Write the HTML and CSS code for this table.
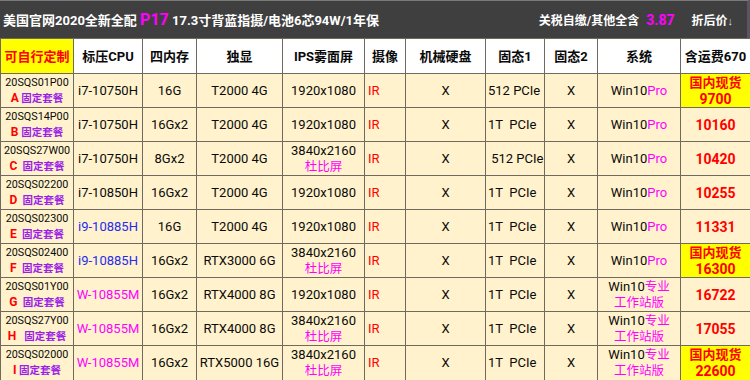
FILE: index.html
```html
<!DOCTYPE html>
<html lang="zh">
<head>
<meta charset="utf-8">
<title>P17</title>
<link rel="stylesheet" href="styles.css">
</head>
<body>
<div class="topbar">
  <div class="title">美国官网2020全新全配 <span class="p17">P17</span> 17.3寸背蓝指摄/电池6芯94W/1年保</div>
  <div class="right"><span>关税自缴/其他全含<span class="rate">3.87</span></span><span class="after">折后价<span class="arrow">↓</span></span></div>
</div>
<table class="grid">
  <colgroup>
    <col class="c1"><col class="c2"><col class="c3"><col class="c4"><col class="c5"><col class="c6"><col class="c7"><col class="c8"><col class="c9"><col class="c10"><col class="c11">
  </colgroup>
  <thead>
    <tr>
      <th class="custom">可自行定制</th><th>标压CPU</th><th>四内存</th><th>独显</th><th>IPS雾面屏</th><th>摄像</th><th>机械硬盘</th><th>固态1</th><th>固态2</th><th>系统</th><th>含运费670</th>
    </tr>
  </thead>
  <tbody>
    <tr>
      <td class="code"><div class="sku">20SQS01P00</div><div class="pkg"><span class="let">A</span> <span class="fix">固定套餐</span></div></td>
      <td>i7-10750H</td><td>16G</td><td>T2000 4G</td><td>1920x1080</td><td class="ir">IR</td><td>X</td><td class="ssd">512 PCIe</td><td>X</td>
      <td>Win10<span class="mag">Pro</span></td>
      <td class="price stock"><div class="cj">国内现货</div><div>9700</div></td>
    </tr>
    <tr>
      <td class="code"><div class="sku">20SQS14P00</div><div class="pkg"><span class="let">B</span> <span class="fix">固定套餐</span></div></td>
      <td>i7-10750H</td><td>16Gx2</td><td>T2000 4G</td><td>1920x1080</td><td class="ir">IR</td><td>X</td><td class="ssd">1T  PCIe</td><td>X</td>
      <td>Win10<span class="mag">Pro</span></td>
      <td class="price">10160</td>
    </tr>
    <tr>
      <td class="code"><div class="sku">20SQS27W00</div><div class="pkg"><span class="let">C</span>  <span class="fix">固定套餐</span></div></td>
      <td>i7-10750H</td><td>8Gx2</td><td>T2000 4G</td><td class="two">3840x2160<div class="mag cj">杜比屏</div></td><td class="ir">IR</td><td>X</td><td class="ssd"> 512 PCIe</td><td>X</td>
      <td>Win10<span class="mag">Pro</span></td>
      <td class="price">10420</td>
    </tr>
    <tr>
      <td class="code"><div class="sku">20SQS02200</div><div class="pkg"><span class="let">D</span>  <span class="fix">固定套餐</span></div></td>
      <td>i7-10850H</td><td>16Gx2</td><td>T2000 4G</td><td>1920x1080</td><td class="ir">IR</td><td>X</td><td class="ssd">1T  PCIe</td><td>X</td>
      <td>Win10<span class="mag">Pro</span></td>
      <td class="price">10255</td>
    </tr>
    <tr>
      <td class="code"><div class="sku">20SQS02300</div><div class="pkg"><span class="let">E</span>  <span class="fix">固定套餐</span></div></td>
      <td class="blue">i9-10885H</td><td>16G</td><td>T2000 4G</td><td>1920x1080</td><td class="ir">IR</td><td>X</td><td class="ssd">1T  PCIe</td><td>X</td>
      <td>Win10<span class="mag">Pro</span></td>
      <td class="price">11331</td>
    </tr>
    <tr>
      <td class="code"><div class="sku">20SQS02400</div><div class="pkg"><span class="let">F</span>  <span class="fix">固定套餐</span></div></td>
      <td class="blue">i9-10885H</td><td>16Gx2</td><td>RTX3000 6G</td><td class="two">3840x2160<div class="mag cj">杜比屏</div></td><td class="ir">IR</td><td>X</td><td class="ssd">1T  PCIe</td><td>X</td>
      <td>Win10<span class="mag">Pro</span></td>
      <td class="price stock"><div class="cj">国内现货</div><div>16300</div></td>
    </tr>
    <tr>
      <td class="code"><div class="sku">20SQS01Y00</div><div class="pkg"><span class="let">G</span>  <span class="fix">固定套餐</span></div></td>
      <td class="mag">W-10855M</td><td>16Gx2</td><td>RTX4000 8G</td><td>1920x1080</td><td class="ir">IR</td><td>X</td><td class="ssd">1T  PCIe</td><td>X</td>
      <td class="two">Win10<span class="mag cj">专业</span><div class="mag cj">工作站版</div></td>
      <td class="price">16722</td>
    </tr>
    <tr>
      <td class="code"><div class="sku">20SQS27Y00</div><div class="pkg"><span class="let">H</span>   <span class="fix">固定套餐</span></div></td>
      <td class="mag">W-10855M</td><td>16Gx2</td><td>RTX4000 8G</td><td class="two">3840x2160<div class="mag cj">杜比屏</div></td><td class="ir">IR</td><td>X</td><td class="ssd">1T  PCIe</td><td>X</td>
      <td class="two">Win10<span class="mag cj">专业</span><div class="mag cj">工作站版</div></td>
      <td class="price">17055</td>
    </tr>
    <tr class="last">
      <td class="code"><div class="sku">20SQS02000</div><div class="pkg"><span class="let">I</span> <span class="fix">固定套餐</span></div></td>
      <td class="mag">W-10855M</td><td>16Gx2</td><td>RTX5000 16G</td><td class="two">3840x2160<div class="mag cj">杜比屏</div></td><td class="ir">IR</td><td>X</td><td class="ssd">1T  PCIe</td><td>X</td>
      <td class="two">Win10<span class="mag cj">专业</span><div class="mag cj">工作站版</div></td>
      <td class="price stock"><div class="cj">国内现货</div><div>22600</div></td>
    </tr>
  </tbody>
</table>
</body>
</html>
```
FILE: styles.css
```css
* { box-sizing: border-box; }
html, body { margin: 0; padding: 0; }
body {
  width: 750px;
  height: 380px;
  overflow: hidden;
  background: #fff2cc;
  font-family: Roboto, "Noto Sans CJK SC", sans-serif;
  color: #0a0a0a;
}
.topbar {
  height: 38px;
  background: #3f3f3f;
  border-top: 1px solid #7a7a7a;
  border-right: 3px solid #5c5460;
  display: flex;
  align-items: center;
  justify-content: space-between;
  color: #fff;
  font-weight: bold;
  font-size: 13px;
  padding: 0 14px 0 3px;
}
.title { white-space: nowrap; }
.p17 { color: #ff00ff; font-size: 16px; }
.right { display: flex; gap: 17px; white-space: nowrap; font-size: 12px; }
.rate { color: #ff00ff; font-size: 14px; margin-left: 7px; }
.arrow {
  font-family: "Liberation Sans", sans-serif;
  font-weight: normal;
  color: #ddd;
  font-size: 11px;
  margin-left: 0;
}

.grid {
  width: 750px;
  border-collapse: collapse;
  table-layout: fixed;
}
.c1 { width: 73px; }
.c2 { width: 69px; }
.c3 { width: 54px; }
.c4 { width: 86px; }
.c5 { width: 82px; }
.c6 { width: 41px; }
.c7 { width: 80px; }
.c8 { width: 59px; }
.c9 { width: 53px; }
.c10 { width: 83px; }
.c11 { width: 70px; }

.grid thead tr { height: 35px; }
.grid tbody tr { height: 34px; }
.grid tbody tr.last { height: 35px; }

.grid th, .grid td {
  border: 1px solid #6e6a60;
  padding: 0;
  text-align: center;
  vertical-align: middle;
  white-space: pre;
  overflow: hidden;
}
.grid th {
  background: #fff;
  font-size: 13px;
  font-weight: bold;
  line-height: 17px;
}
.grid th.custom {
  background: #ffff00;
  color: #ff0000;
}
.grid td {
  font-size: 13px;
  line-height: 16px;
}
.grid td span { line-height: 1; }

.sku { font-size: 10.8px; line-height: 16px; }
.pkg { font-size: 10.5px; line-height: 16px; }
.let { color: #ff0000; font-weight: bold; font-size: 12px; }
.fix { color: #9b1fe8; font-weight: bold; }

.grid td.ir { text-align: left; padding-left: 3px; color: #ff0000; }
.grid td.ssd { text-align: left; padding-left: 2px; }
.mag { color: #ff00ff; }
.blue { color: #1f2cf0; }
.cj { font-size: 12.5px; }
div.cj { line-height: 16px; }

.grid td.price {
  color: #ff0000;
  font-weight: bold;
  font-size: 14px;
  line-height: 16px;
}
.grid td.price.stock { background: #ffff00; }
.grid td.price div { line-height: 16px; }
.grid td.price .cj { font-size: 13px; }
```
